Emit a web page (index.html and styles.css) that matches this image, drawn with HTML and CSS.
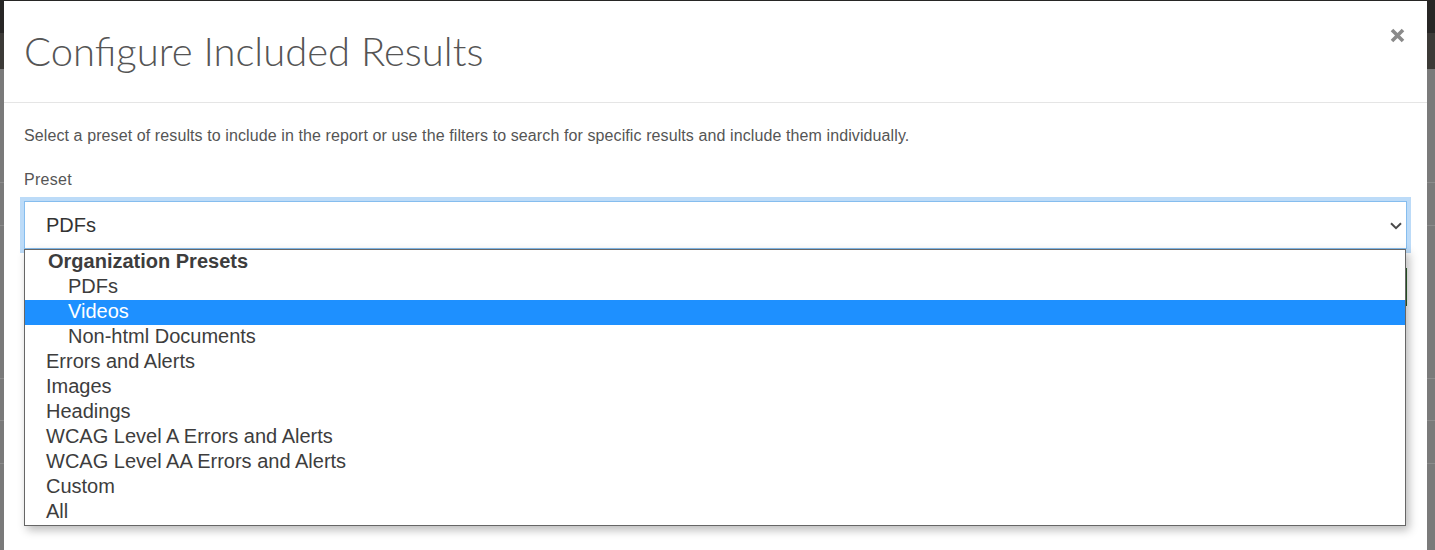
FILE: index.html
```html
<!DOCTYPE html>
<html lang="en">
<head>
<meta charset="utf-8">
<title>Configure Included Results</title>
<link rel="stylesheet" href="styles.css">
</head>
<body>
<div class="modal">
  <div class="modal-header">
    <h1 class="modal-title">Configure Included Results</h1>
    <button class="close" type="button" aria-label="Close">
      <svg width="15" height="15" viewBox="0 0 15 15"><path d="M2 2 L13 13 M13 2 L2 13" stroke="#8a8a8a" stroke-width="3.6" stroke-linecap="butt" fill="none"/></svg>
    </button>
  </div>
  <div class="modal-body">
    <p class="intro">Select a preset of results to include in the report or use the filters to search for specific results and include them individually.</p>
    <label class="field-label">Preset</label>
    <div class="select-wrap">
      <div class="select">
        <span class="select-value">PDFs</span>
        <svg class="chevron" width="12" height="8" viewBox="0 0 12 8"><path d="M1 1.2 L6 6.2 L11 1.2" stroke="#4a4a4a" stroke-width="2" fill="none"/></svg>
      </div>
      <ul class="listbox">
        <li class="group">Organization Presets</li>
        <li class="opt sub">PDFs</li>
        <li class="opt sub active">Videos</li>
        <li class="opt sub">Non-html Documents</li>
        <li class="opt">Errors and Alerts</li>
        <li class="opt">Images</li>
        <li class="opt">Headings</li>
        <li class="opt">WCAG Level A Errors and Alerts</li>
        <li class="opt">WCAG Level AA Errors and Alerts</li>
        <li class="opt">Custom</li>
        <li class="opt">All</li>
      </ul>
    </div>
    <div class="actions">
      <button class="btn-green" type="button">Include</button>
    </div>
  </div>
</div>
</body>
</html>
```

FILE: styles.css
```css
html, body {
  margin: 0;
  padding: 0;
}
body {
  height: 550px;
  overflow: hidden;
  background:
    linear-gradient(#8c8c8c, #8c8c8c) 0 182px / 100% 1px no-repeat,
    linear-gradient(#8c8c8c, #8c8c8c) 0 225px / 100% 1px no-repeat,
    linear-gradient(#8c8c8c, #8c8c8c) 0 378px / 100% 1px no-repeat,
    linear-gradient(#8c8c8c, #8c8c8c) 0 420px / 100% 1px no-repeat,
    linear-gradient(#8c8c8c, #8c8c8c) 0 463px / 100% 1px no-repeat,
    linear-gradient(to bottom, #272625 0, #272625 33px, #3c3a37 33px, #3c3a37 69px, #7a7a7a 69px) 0 0 / 100% 100% no-repeat;
  font-family: "Liberation Sans", Arial, sans-serif;
}
.modal {
  margin: 1px 8px 0 4px;
  background: #fff;
  min-height: 600px;
}
.modal-header {
  display: flex;
  justify-content: space-between;
  align-items: flex-start;
  padding: 25px 22px 26px 20px;
  border-bottom: 1px solid #e5e5e5;
}
.modal-title {
  margin: 0;
  font-family: Lato, "Liberation Sans", sans-serif;
  font-weight: 300;
  font-size: 40px;
  line-height: 50px;
  color: #555;
}
.close {
  margin: 2px 0 0 0;
  padding: 0;
  border: 0;
  background: none;
  display: flex;
  cursor: pointer;
}
.modal-body {
  padding: 23px 20px 20px 20px;
}
.intro {
  margin: 0 0 24px 0;
  font-size: 16px;
  letter-spacing: 0.1px;
  line-height: 20px;
  color: #555;
}
.field-label {
  display: block;
  margin: 0 0 11px 0;
  font-size: 16px;
  letter-spacing: 0.3px;
  line-height: 20px;
  color: #555;
}
.select-wrap {
  position: relative;
}
.select {
  box-sizing: border-box;
  height: 48px;
  display: flex;
  align-items: center;
  justify-content: space-between;
  padding: 0 4px 0 21px;
  border: 1px solid #86bdee;
  box-shadow: 0 0 0 4px #bcdbf8;
  background: #fff;
  font-size: 20px;
  color: #333;
}
.chevron {
  display: block;
  margin-top: 1px;
}
.listbox {
  position: absolute;
  top: 48px;
  left: 0;
  right: 1px;
  z-index: 2;
  margin: 0;
  padding: 0;
  list-style: none;
  background: #fff;
  border: 1px solid #666;
  box-shadow: 3px 4px 9px rgba(0, 0, 0, 0.28);
  font-size: 20px;
  line-height: 22px;
  color: #3d3d3d;
}
.listbox li {
  height: 25px;
  padding-left: 21px;
  white-space: nowrap;
}
.listbox .group {
  font-weight: bold;
  padding-left: 23px;
}
.listbox .sub {
  padding-left: 43px;
}
.listbox .active {
  background: #1e90ff;
  color: #fff;
}
.actions {
  display: flex;
  justify-content: flex-end;
  margin-top: 19px;
}
.btn-green {
  height: 38px;
  padding: 0 16px;
  background: #3d8b3d;
  border: 1px solid #2b5e2b;
  color: #fff;
  font-size: 14px;
  font-family: "Liberation Sans", Arial, sans-serif;
}
```
